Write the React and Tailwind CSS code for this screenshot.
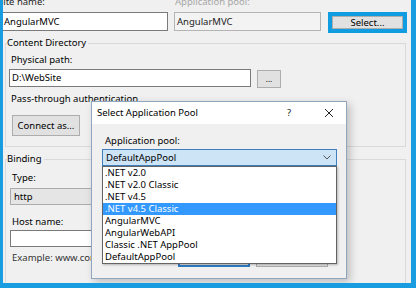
import React from "react";

const items = [
  ".NET v2.0",
  ".NET v2.0 Classic",
  ".NET v4.5",
  ".NET v4.5 Classic",
  "AngularMVC",
  "AngularWebAPI",
  "Classic .NET AppPool",
  "DefaultAppPool",
];

export default function App() {
  return (
    <div className="w-[416px] h-[288px] bg-[#f0f0f0] border-l-[3px] border-r-[5px] border-b-[5px] border-[#1a9de0] relative overflow-hidden font-['Noto_Sans',sans-serif] text-[9.5px] leading-[12px] text-black">
      {/* top row */}
      <div className="flex items-start mt-[-4px]">
        <div className="ml-[-5px] w-[170px] flex flex-col">
          <div className="h-[12px] text-[#1e1e1e]">Site name:</div>
          <div className="mt-[4px] h-[19px] bg-white border border-[#7a7a7a] flex items-center pl-[5px]">AngularMVC</div>
        </div>
        <div className="ml-[6px] w-[147px] flex flex-col">
          <div className="h-[12px] pl-[1px] text-[#a6a6a6]">Application pool:</div>
          <div className="mt-[4px] h-[19px] bg-[#f3f3f3] border border-[#b4b4b4] flex items-center pl-[2px] text-[#222]">AngularMVC</div>
        </div>
        <div className="ml-[7px] mt-[16px] w-[79px] h-[21px] border-[4px] border-[#109ce0] flex">
          <div className="flex-1 bg-[#e1e1e1] border border-[#adadad] flex items-center justify-center">Select...</div>
        </div>
      </div>

      {/* Content Directory group */}
      <div className="relative mt-[10px] ml-[2px] w-[401px] h-[104px] border border-[#d9d9d9] flex flex-col">
        <span className="absolute left-[1px] top-[-7px] bg-[#f0f0f0] pr-[2px]">Content Directory</span>
        <div className="mt-[10px] pl-[5px] h-[12px]">Physical path:</div>
        <div className="mt-[2px] ml-[3px] flex items-center">
          <div className="w-[242px] h-[18px] bg-white border border-[#7a7a7a] flex items-center pl-[2px]">D:\WebSite</div>
          <div className="ml-[6px] w-[24px] h-[18px] bg-[#e1e1e1] border border-[#adadad] flex items-center justify-center text-[8px] mt-[2px]">...</div>
        </div>
        <div className="mt-[5px] pl-[5px] h-[12px]">Pass-through authentication</div>
        <div className="mt-[10px] ml-[6px] w-[68px] h-[21px] bg-[#e1e1e1] border border-[#adadad] flex items-center justify-center">Connect as...</div>
      </div>

      {/* Binding group */}
      <div className="relative mt-[12px] ml-[2px] w-[401px] h-[140px] border border-[#d9d9d9] flex flex-col">
        <span className="absolute left-[1px] top-[-7px] bg-[#f0f0f0] pr-[2px]">Binding</span>
        <div className="mt-[12px] pl-[6px] h-[12px]">Type:</div>
        <div className="mt-[4px] ml-[4px] w-[200px] h-[17px] bg-[#e5e5e5] border border-[#acacac] flex items-center pl-[3px]">http</div>
        <div className="mt-[11px] pl-[6px] h-[12px]">Host name:</div>
        <div className="mt-[2px] ml-[4px] w-[200px] h-[17px] bg-white border border-[#7a7a7a]"></div>
        <div className="mt-[5px] pl-[6px] h-[12px] text-[#333]">Example: www.contoso.com</div>
      </div>

      {/* Dialog */}
      <div className="absolute left-[88px] top-[101px] w-[256px] h-[178px] bg-[#f0f0f0] border border-[#8ea6bf] shadow-[3px_3px_8px_rgba(0,0,0,0.22)] flex flex-col">
        <div className="h-[22px] bg-white flex items-center pl-[5px]">
          <span className="flex-1">Select Application Pool</span>
          <span className="w-[10px] text-center mr-[30px] text-[#222]">?</span>
          <svg width="10" height="10" viewBox="0 0 10 10" className="mr-[12px]">
            <path d="M1 1 L9 9 M9 1 L1 9" stroke="#222" strokeWidth="1" />
          </svg>
        </div>
        <div className="mt-[11px] pl-[13px] h-[12px]">Application pool:</div>
        <div className="mt-[2px] ml-[10px] w-[235px] h-[17px] bg-[#cde3f6] border border-[#3f7fbd] flex items-center pl-[3px]">
          <span className="flex-1">DefaultAppPool</span>
          <svg width="8" height="5" viewBox="0 0 8 5" className="mr-[5px]">
            <path d="M0.5 0.5 L4 4 L7.5 0.5" stroke="#555" strokeWidth="1" fill="none" />
          </svg>
        </div>
        <div className="mt-[79px] flex justify-end pr-[18px] gap-[6px]">
          <div className="w-[72px] h-[22px] bg-[#e1e1e1] border-2 border-[#2f7cc4] flex items-center justify-center">OK</div>
          <div className="w-[72px] h-[22px] bg-[#e1e1e1] border border-[#adadad] flex items-center justify-center">Cancel</div>
        </div>

        {/* dropdown list */}
        <div className="absolute left-[10px] top-[64px] w-[235px] h-[98px] bg-white border border-[#646464] shadow-[1px_1px_2px_rgba(0,0,0,0.25)] flex flex-col">
          {items.map((it, i) => (
            <div
              key={it}
              className={
                i === 3
                  ? "h-[12px] pl-[2px] bg-[#3399ff] text-white flex items-center"
                  : "h-[12px] pl-[2px] flex items-center"
              }
            >
              {it}
            </div>
          ))}
        </div>
      </div>
    </div>
  );
}
